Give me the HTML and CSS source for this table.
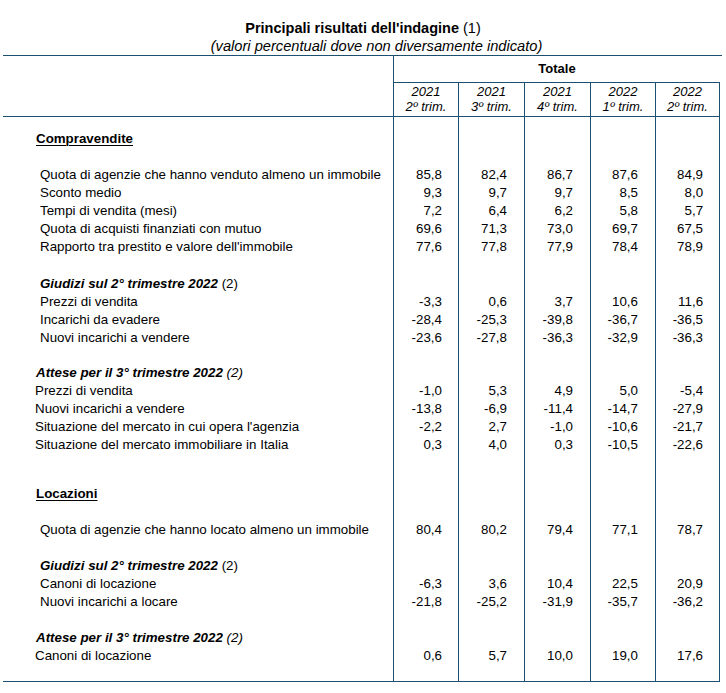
FILE: index.html
```html
<!DOCTYPE html>
<html lang="it">
<head>
<meta charset="utf-8">
<title>Principali risultati dell'indagine</title>
<link rel="stylesheet" href="styles.css">
</head>
<body>
<div class="page">
  <div class="heading">
    <div class="title"><b>Principali risultati dell'indagine</b> (1)</div>
    <div class="subtitle">(valori percentuali dove non diversamente indicato)</div>
  </div>
  <table class="t">
    <colgroup>
      <col class="c-label"><col class="c65"><col class="c66"><col class="c66"><col class="c65"><col class="c65">
    </colgroup>
    <thead>
      <tr class="h1">
        <th class="lab" rowspan="2"></th>
        <th class="tot" colspan="5">Totale</th>
      </tr>
      <tr class="h2">
        <th class="per">2021<br>2º trim.</th>
        <th class="per">2021<br>3º trim.</th>
        <th class="per">2021<br>4º trim.</th>
        <th class="per">2022<br>1º trim.</th>
        <th class="per last">2022<br>2º trim.</th>
      </tr>
    </thead>
    <tbody>
      <tr class="sp s13"><td></td><td></td><td></td><td></td><td></td><td class="last"></td></tr>
      <tr><td class="sec">Compravendite</td><td></td><td></td><td></td><td></td><td class="last"></td></tr>
      <tr class="sp s18"><td></td><td></td><td></td><td></td><td></td><td class="last"></td></tr>
      <tr><td class="l40">Quota di agenzie che hanno venduto almeno un immobile</td><td>85,8</td><td>82,4</td><td>86,7</td><td>87,6</td><td class="last">84,9</td></tr>
      <tr><td class="l40">Sconto medio</td><td>9,3</td><td>9,7</td><td>9,7</td><td>8,5</td><td class="last">8,0</td></tr>
      <tr><td class="l40">Tempi di vendita (mesi)</td><td>7,2</td><td>6,4</td><td>6,2</td><td>5,8</td><td class="last">5,7</td></tr>
      <tr><td class="l40">Quota di acquisti finanziati con mutuo</td><td>69,6</td><td>71,3</td><td>73,0</td><td>69,7</td><td class="last">67,5</td></tr>
      <tr><td class="l40">Rapporto tra prestito e valore dell'immobile</td><td>77,6</td><td>77,8</td><td>77,9</td><td>78,4</td><td class="last">78,9</td></tr>
      <tr class="sp s19"><td></td><td></td><td></td><td></td><td></td><td class="last"></td></tr>
      <tr><td class="l40"><b><i>Giudizi sul 2° trimestre 2022</i></b> (2)</td><td></td><td></td><td></td><td></td><td class="last"></td></tr>
      <tr><td class="l40">Prezzi di vendita</td><td>-3,3</td><td>0,6</td><td>3,7</td><td>10,6</td><td class="last">11,6</td></tr>
      <tr><td class="l40">Incarichi da evadere</td><td>-28,4</td><td>-25,3</td><td>-39,8</td><td>-36,7</td><td class="last">-36,5</td></tr>
      <tr><td class="l40">Nuovi incarichi a vendere</td><td>-23,6</td><td>-27,8</td><td>-36,3</td><td>-32,9</td><td class="last">-36,3</td></tr>
      <tr class="sp s17"><td></td><td></td><td></td><td></td><td></td><td class="last"></td></tr>
      <tr><td class="l36"><b><i>Attese per il 3° trimestre 2022</i></b> <i>(2)</i></td><td></td><td></td><td></td><td></td><td class="last"></td></tr>
      <tr><td class="l35">Prezzi di vendita</td><td>-1,0</td><td>5,3</td><td>4,9</td><td>5,0</td><td class="last">-5,4</td></tr>
      <tr><td class="l35">Nuovi incarichi a vendere</td><td>-13,8</td><td>-6,9</td><td>-11,4</td><td>-14,7</td><td class="last">-27,9</td></tr>
      <tr><td class="l35">Situazione del mercato in cui opera l'agenzia</td><td>-2,2</td><td>2,7</td><td>-1,0</td><td>-10,6</td><td class="last">-21,7</td></tr>
      <tr><td class="l35">Situazione del mercato immobiliare in Italia</td><td>0,3</td><td>4,0</td><td>0,3</td><td>-10,5</td><td class="last">-22,6</td></tr>
      <tr class="sp s31"><td></td><td></td><td></td><td></td><td></td><td class="last"></td></tr>
      <tr><td class="sec">Locazioni</td><td></td><td></td><td></td><td></td><td class="last"></td></tr>
      <tr class="sp s18"><td></td><td></td><td></td><td></td><td></td><td class="last"></td></tr>
      <tr><td class="l40">Quota di agenzie che hanno locato almeno un immobile</td><td>80,4</td><td>80,2</td><td>79,4</td><td>77,1</td><td class="last">78,7</td></tr>
      <tr class="sp s18"><td></td><td></td><td></td><td></td><td></td><td class="last"></td></tr>
      <tr><td class="l40"><b><i>Giudizi sul 2° trimestre 2022</i></b> (2)</td><td></td><td></td><td></td><td></td><td class="last"></td></tr>
      <tr><td class="l40">Canoni di locazione</td><td>-6,3</td><td>3,6</td><td>10,4</td><td>22,5</td><td class="last">20,9</td></tr>
      <tr><td class="l40">Nuovi incarichi a locare</td><td>-21,8</td><td>-25,2</td><td>-31,9</td><td>-35,7</td><td class="last">-36,2</td></tr>
      <tr class="sp s18"><td></td><td></td><td></td><td></td><td></td><td class="last"></td></tr>
      <tr><td class="l36"><b><i>Attese per il 3° trimestre 2022</i></b> <i>(2)</i></td><td></td><td></td><td></td><td></td><td class="last"></td></tr>
      <tr><td class="l35">Canoni di locazione</td><td>0,6</td><td>5,7</td><td>10,0</td><td>19,0</td><td class="last">17,6</td></tr>
      <tr class="sp s16 end"><td></td><td></td><td></td><td></td><td></td><td class="last"></td></tr>
    </tbody>
  </table>
</div>
</body>
</html>
```
FILE: styles.css
```css
html, body {
  margin: 0;
  padding: 0;
  background: #ffffff;
}

body {
  font-family: "Liberation Sans", Arial, sans-serif;
  color: #000000;
}

.page {
  padding-left: 3px;
}

.heading {
  width: 719px;
  border-bottom: 1px solid #1c4f70;
  height: 56px;
  box-sizing: border-box;
  padding-top: 19px;
  text-align: center;
}

.title {
  font-size: 14.5px;
  line-height: 18px;
  padding-left: 1px;
}

.subtitle {
  font-size: 14.67px;
  line-height: 18px;
  font-style: italic;
  padding-left: 28px;
}

.t {
  border-collapse: separate;
  border-spacing: 0;
  table-layout: fixed;
  width: 717px;
  font-size: 13.33px;
}

.c-label { width: 390px; }
.c65 { width: 65px; }
.c66 { width: 66px; }

.t th,
.t td {
  padding: 0;
  border-left: 1px solid #1c4f70;
  font-weight: normal;
}

.t th.lab,
.t td:first-child {
  border-left: none;
}

.t .last {
  border-right: 1px solid #1c4f70;
}

.h1 { height: 26px; }

.h1 .tot {
  font-size: 13px;
  font-weight: bold;
  text-align: center;
  vertical-align: middle;
  line-height: 16px;
}

.h1 .lab {
  border-bottom: 1px solid #1c4f70;
}

.h2 th {
  border-top: 1px solid #1c4f70;
  border-bottom: 1px solid #1c4f70;
  height: 32px;
  font-size: 13px;
  font-style: italic;
  text-align: center;
  line-height: 15px;
  vertical-align: middle;
  padding-bottom: 1px;
}

.t tbody tr { height: 18px; }

.t tbody td {
  line-height: 18px;
  height: 18px;
  text-align: right;
  white-space: nowrap;
  vertical-align: middle;
}

.t tbody td:nth-child(2) { padding-right: 16px; }
.t tbody td:nth-child(3),
.t tbody td:nth-child(4),
.t tbody td:nth-child(5) { padding-right: 17px; }
.t tbody td:nth-child(6) { padding-right: 16px; }

.t tbody td:first-child {
  text-align: left;
  padding-right: 0;
}

.t td.sec {
  padding-left: 33px;
  font-weight: bold;
  text-decoration: underline;
  text-decoration-thickness: 1px;
  text-underline-offset: 2px;
}

.t td.l40 { padding-left: 37px; }
.t td.l36 { padding-left: 33px; }
.t td.l35 { padding-left: 32px; }

.t tr.sp td { line-height: 0; font-size: 0; }
.t tr.s13, .t tr.s13 td { height: 13px; }
.t tr.s16, .t tr.s16 td { height: 16px; }
.t tr.s17, .t tr.s17 td { height: 17px; }
.t tr.s18, .t tr.s18 td { height: 18px; }
.t tr.s19, .t tr.s19 td { height: 19px; }
.t tr.s31, .t tr.s31 td { height: 31px; }

.t tr.end td {
  border-bottom: 1px solid #1c4f70;
}
```
